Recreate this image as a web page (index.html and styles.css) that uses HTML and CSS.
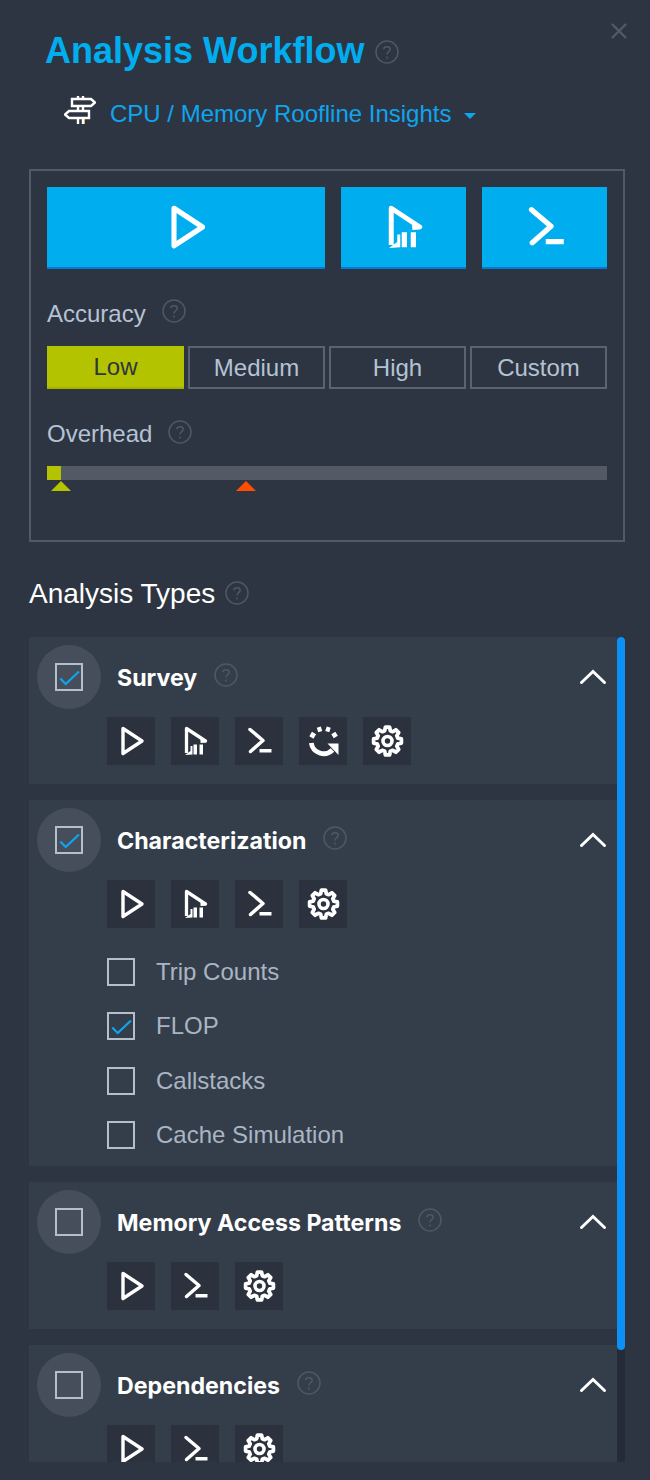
FILE: index.html
```html
<!DOCTYPE html>
<html lang="en">
<head>
    <meta charset="UTF-8">
    <meta name="viewport" content="width=device-width, initial-scale=1.0">
    <title>Analysis Workflow</title>
    <link rel="stylesheet" href="styles.css">
</head>
<body>
    <svg class="icon-defs" width="0" height="0">
        <defs>
            <symbol id="i-play" viewBox="0 0 48 48">
                <path d="M16 11.500 L35 24 L16 36.500 Z" fill="none" stroke="currentColor" stroke-width="3.400" stroke-linejoin="round"/>
            </symbol>
            <symbol id="i-profile" viewBox="0 0 48 48">
                <path d="M15.500 36 V11.500 L34.500 24 L29.500 24.300" fill="none" stroke="currentColor" stroke-width="3.300" stroke-linejoin="round"/>
                <path d="M14 38 L19.500 34 V29 H21.500 V37.500 Z M22.500 27.500 H26 V37.500 H22.500 Z M28.500 27.500 H32 V37.500 H28.500 Z" fill="currentColor"/>
            </symbol>
            <symbol id="i-term" viewBox="0 0 48 48">
                <path d="M15 12.500 L28 23.500 L15.500 34.500" fill="none" stroke="currentColor" stroke-width="3.500" stroke-linecap="round" stroke-linejoin="round"/>
                <path d="M24.500 32 H36.500 V35.500 H24.500 Z" fill="currentColor"/>
            </symbol>
            <symbol id="i-refresh" viewBox="0 0 48 48">
                <path d="M12.300 26 A12.500 12.500 0 0 0 33.500 33" fill="none" stroke="currentColor" stroke-width="4.800"/>
                <path d="M12.400 20.500 L15 16 M18.500 13 L22.500 11.700 M27 11.700 L31 13 M34.300 16 L36.800 20" fill="none" stroke="currentColor" stroke-width="4.800"/>
                <path d="M28.500 26.500 H39.500 V38 Z" fill="currentColor"/>
            </symbol>
            <symbol id="i-gear" viewBox="0 0 48 48">
                <path d="M21 8 h6 l1 5 l3.500 1.500 l4.500 -2.700 l4 4 l-2.700 4.500 l1.500 3.500 l5 1 v6 l-5 1 l-1.500 3.500 l2.700 4.500 l-4 4 l-4.500 -2.700 l-3.500 1.500 l-1 5 h-6 l-1 -5 l-3.500 -1.500 l-4.500 2.700 l-4 -4 l2.700 -4.500 l-1.500 -3.500 l-5 -1 v-6 l5 -1 l1.500 -3.500 l-2.700 -4.500 l4 -4 l4.500 2.700 l3.500 -1.500 z" transform="translate(24.500 24) scale(.7) translate(-24 -27.800)" fill="none" stroke="currentColor" stroke-width="5.400" stroke-linejoin="round"/>
                <circle cx="24.500" cy="24" r="4.500" fill="none" stroke="currentColor" stroke-width="3.600"/>
            </symbol>
            <symbol id="i-help" viewBox="0 0 24 24">
                <circle cx="12" cy="12" r="11" fill="none" stroke="currentColor" stroke-width="1.500"/>
                <path d="M8.800 9.300 C8.800 5.800 15.200 5.800 15.200 9.300 C15.200 11.800 12 11.600 12 14.500" fill="none" stroke="currentColor" stroke-width="1.500"/>
                <circle cx="12" cy="17.500" r="1" fill="currentColor"/>
            </symbol>
            <symbol id="i-check" viewBox="0 0 24 24">
                <path d="M3.300 13.500 L8.700 19 L22 6.500" fill="none" stroke="currentColor" stroke-width="2.300"/>
            </symbol>
            <symbol id="i-chevron" viewBox="0 0 28 16">
                <path d="M2.500 13.500 L14 2.500 L25.500 13.500" fill="none" stroke="currentColor" stroke-width="3" stroke-linecap="round"/>
            </symbol>
        </defs>
    </svg>

    <div class="panel">
        <svg class="close-icon" viewBox="0 0 18 18"><path d="M2 2 L16 16 M16 2 L2 16" fill="none" stroke="currentColor" stroke-width="2.400"/></svg>

        <div class="title-row">
            <h1 class="title">Analysis Workflow</h1>
            <svg class="help help-title"><use href="#i-help"/></svg>
        </div>

        <div class="workflow-row">
            <svg class="signpost" viewBox="0 0 32 28">
                <path d="M14 0 V3 M19 0 V3 M14 10 V15 M19 10 V15 M14 22 V28 M19 22 V28" fill="none" stroke="#fff" stroke-width="2.400"/>
                <path d="M20.500 23 V28" fill="none" stroke="#f0b040" stroke-width="1"/>
                <path d="M8 3 H27 L31 6.500 L27 10 H8 Z M25 15 H5 L1 18.500 L5 22 H25 Z" fill="none" stroke="#fff" stroke-width="2.400"/>
            </svg>
            <span class="workflow-name">CPU / Memory Roofline Insights</span>
            <span class="caret"></span>
        </div>

        <section class="run-box">
            <div class="run-buttons">
                <button class="run-btn run-btn-main"><svg><use href="#i-play"/></svg></button>
                <button class="run-btn"><svg><use href="#i-profile"/></svg></button>
                <button class="run-btn"><svg><use href="#i-term"/></svg></button>
            </div>

            <div class="label-row label-accuracy">
                <span>Accuracy</span>
                <svg class="help"><use href="#i-help"/></svg>
            </div>
            <div class="levels">
                <button class="level level-active">Low</button>
                <button class="level">Medium</button>
                <button class="level">High</button>
                <button class="level">Custom</button>
            </div>

            <div class="label-row label-overhead">
                <span>Overhead</span>
                <svg class="help"><use href="#i-help"/></svg>
            </div>
            <div class="meter">
                <div class="meter-fill"></div>
                <span class="marker marker-low"></span>
                <span class="marker marker-high"></span>
            </div>
        </section>

        <div class="types-heading">
            <h2>Analysis Types</h2>
            <svg class="help"><use href="#i-help"/></svg>
        </div>

        <div class="types-scroll">
            <div class="types-list">
                <section class="type-card">
                    <div class="type-head">
                        <span class="check-halo"><span class="check check-on"><svg><use href="#i-check"/></svg></span></span>
                        <span class="type-name">Survey</span>
                        <svg class="help"><use href="#i-help"/></svg>
                        <svg class="chevron"><use href="#i-chevron"/></svg>
                    </div>
                    <div class="tools">
                        <span class="tool"><svg><use href="#i-play"/></svg></span>
                        <span class="tool"><svg><use href="#i-profile"/></svg></span>
                        <span class="tool"><svg><use href="#i-term"/></svg></span>
                        <span class="tool"><svg><use href="#i-refresh"/></svg></span>
                        <span class="tool"><svg><use href="#i-gear"/></svg></span>
                    </div>
                </section>

                <section class="type-card">
                    <div class="type-head">
                        <span class="check-halo"><span class="check check-on"><svg><use href="#i-check"/></svg></span></span>
                        <span class="type-name">Characterization</span>
                        <svg class="help"><use href="#i-help"/></svg>
                        <svg class="chevron"><use href="#i-chevron"/></svg>
                    </div>
                    <div class="tools">
                        <span class="tool"><svg><use href="#i-play"/></svg></span>
                        <span class="tool"><svg><use href="#i-profile"/></svg></span>
                        <span class="tool"><svg><use href="#i-term"/></svg></span>
                        <span class="tool"><svg><use href="#i-gear"/></svg></span>
                    </div>
                    <ul class="options">
                        <li><span class="check"></span>Trip Counts</li>
                        <li><span class="check check-on"><svg><use href="#i-check"/></svg></span>FLOP</li>
                        <li><span class="check"></span>Callstacks</li>
                        <li><span class="check"></span>Cache Simulation</li>
                    </ul>
                </section>

                <section class="type-card">
                    <div class="type-head">
                        <span class="check-halo"><span class="check"></span></span>
                        <span class="type-name">Memory Access Patterns</span>
                        <svg class="help"><use href="#i-help"/></svg>
                        <svg class="chevron"><use href="#i-chevron"/></svg>
                    </div>
                    <div class="tools">
                        <span class="tool"><svg><use href="#i-play"/></svg></span>
                        <span class="tool"><svg><use href="#i-term"/></svg></span>
                        <span class="tool"><svg><use href="#i-gear"/></svg></span>
                    </div>
                </section>

                <section class="type-card">
                    <div class="type-head">
                        <span class="check-halo"><span class="check"></span></span>
                        <span class="type-name">Dependencies</span>
                        <svg class="help"><use href="#i-help"/></svg>
                        <svg class="chevron"><use href="#i-chevron"/></svg>
                    </div>
                    <div class="tools">
                        <span class="tool"><svg><use href="#i-play"/></svg></span>
                        <span class="tool"><svg><use href="#i-term"/></svg></span>
                        <span class="tool"><svg><use href="#i-gear"/></svg></span>
                    </div>
                </section>
            </div>
            <div class="scrollbar"><div class="scrollbar-thumb"></div></div>
        </div>
    </div>
</body>
</html>
```

FILE: styles.css
```css
/* General Styles */
body {
    font-family: "Liberation Sans", Arial, sans-serif;
    background-color: #2e3542;
    margin: 0;
    padding: 0;
}

.icon-defs {
    display: block;
    height: 0;
}

.panel {
    position: relative;
    width: 650px;
    height: 1480px;
    overflow: hidden;
    padding: 26px 25px 0 29px;
    box-sizing: border-box;
}

.close-icon {
    position: absolute;
    top: 22px;
    left: 610px;
    width: 18px;
    height: 18px;
    color: #525a68;
}

.help {
    width: 24px;
    height: 24px;
    color: #4f5764;
    flex: none;
}

/* Header */
.title-row {
    display: flex;
    align-items: center;
    margin-left: 16px;
    height: 48px;
}

.title {
    margin: 2px 0 0;
    font-size: 36px;
    font-weight: bold;
    color: #00aeef;
}

.help-title {
    margin: 4px 0 0 11px;
}

.workflow-row {
    display: flex;
    align-items: center;
    height: 36px;
    margin: 22px 0 0 35px;
}

.signpost {
    width: 32px;
    height: 28px;
    margin: -8px 0 0 0;
}

.workflow-name {
    margin-left: 14px;
    font-size: 24px;
    color: #0ea5ed;
}

.caret {
    margin: 4px 0 0 13px;
    border-left: 6px solid transparent;
    border-right: 6px solid transparent;
    border-top: 6px solid #0ea5ed;
}

/* Run box */
.run-box {
    margin-top: 37px;
    height: 373px;
    box-sizing: border-box;
    border: 2px solid #535a67;
    padding: 16px;
}

.run-buttons {
    display: flex;
    gap: 16px;
}

.run-btn {
    width: 125px;
    height: 82px;
    padding: 0;
    border: none;
    border-bottom: 2px solid #0b78d0;
    background-color: #00aeef;
    color: #fff;
    display: flex;
    align-items: center;
    justify-content: center;
}

.run-btn svg {
    width: 72px;
    height: 72px;
}

.run-btn-main {
    width: 278px;
}

.label-row {
    display: flex;
    align-items: center;
    font-size: 24px;
    color: #b4c3d4;
}

.label-accuracy {
    margin-top: 29px;
    height: 32px;
}

.label-accuracy .help {
    margin: -6px 0 0 16px;
}

.levels {
    display: grid;
    grid-template-columns: repeat(4, 1fr);
    gap: 4px;
    margin-top: 16px;
}

.level {
    height: 43px;
    padding: 0;
    box-sizing: border-box;
    border: 2px solid #5b6370;
    background: transparent;
    font-family: inherit;
    font-size: 24px;
    color: #b4c3d4;
}

.level-active {
    border: none;
    border-bottom: 2px solid #a3b300;
    background-color: #b4c300;
    color: #2f3542;
}

.label-overhead {
    margin-top: 29px;
    height: 32px;
}

.label-overhead .help {
    margin: -4px 0 0 16px;
}

.meter {
    position: relative;
    margin-top: 16px;
    height: 14px;
    background-color: #535a66;
}

.meter-fill {
    width: 14px;
    height: 14px;
    background-color: #b4c300;
}

.marker {
    position: absolute;
    top: 15px;
    border-left: 10px solid transparent;
    border-right: 10px solid transparent;
    border-bottom: 10px solid;
}

.marker-low {
    left: 4px;
    border-bottom-color: #b4c300;
}

.marker-high {
    left: 189px;
    border-bottom-color: #ff4e00;
}

/* Analysis types */
.types-heading {
    display: flex;
    align-items: center;
    margin-top: 34px;
    height: 36px;
}

.types-heading h2 {
    margin: 0;
    font-size: 28px;
    font-weight: normal;
    color: #fff;
}

.types-heading .help {
    margin: -3px 0 0 10px;
}

.types-scroll {
    display: flex;
    margin-top: 25px;
    height: 825px;
    overflow: hidden;
}

.types-list {
    flex: 1;
    display: flex;
    flex-direction: column;
    gap: 16px;
    min-width: 0;
}

.type-card {
    flex: none;
    background-color: #343e4a;
    padding-bottom: 19px;
}

.type-head {
    display: flex;
    align-items: center;
    height: 80px;
    padding-left: 8px;
}

.check-halo {
    width: 64px;
    height: 64px;
    border-radius: 50%;
    background-color: #454e5a;
    display: flex;
    align-items: center;
    justify-content: center;
    flex: none;
}

.check {
    width: 28px;
    height: 28px;
    box-sizing: border-box;
    border: 2px solid #b4bfcd;
    display: inline-block;
    flex: none;
}

.check svg {
    display: block;
    width: 24px;
    height: 24px;
    color: #0ea5ed;
}

.type-name {
    margin: 2px 0 0 16px;
    font-family: Inter, sans-serif;
    font-size: 23.2px;
    font-weight: 700;
    color: #fff;
}

.type-head .help {
    margin: -4px 0 0 17px;
}

.chevron {
    width: 28px;
    height: 16px;
    margin-left: auto;
    margin-right: 10px;
    color: #fff;
}

.tools {
    display: flex;
    gap: 16px;
    padding-left: 78px;
}

.tool {
    width: 48px;
    height: 48px;
    background-color: #2b313d;
    color: #fff;
}

.tool svg {
    display: block;
    width: 48px;
    height: 48px;
}

.options {
    list-style: none;
    margin: 17px 0 -15.2px;
    padding: 0 0 0 78px;
    font-size: 24px;
    color: #a9b5c3;
}

.options li {
    display: flex;
    align-items: center;
    height: 54.3px;
}

.options .check {
    margin-right: 21px;
}

.scrollbar {
    flex: none;
    width: 8px;
    background-color: #262c37;
}

.scrollbar-thumb {
    height: 713px;
    border-radius: 4px;
    background-color: #0d90f5;
}
```
